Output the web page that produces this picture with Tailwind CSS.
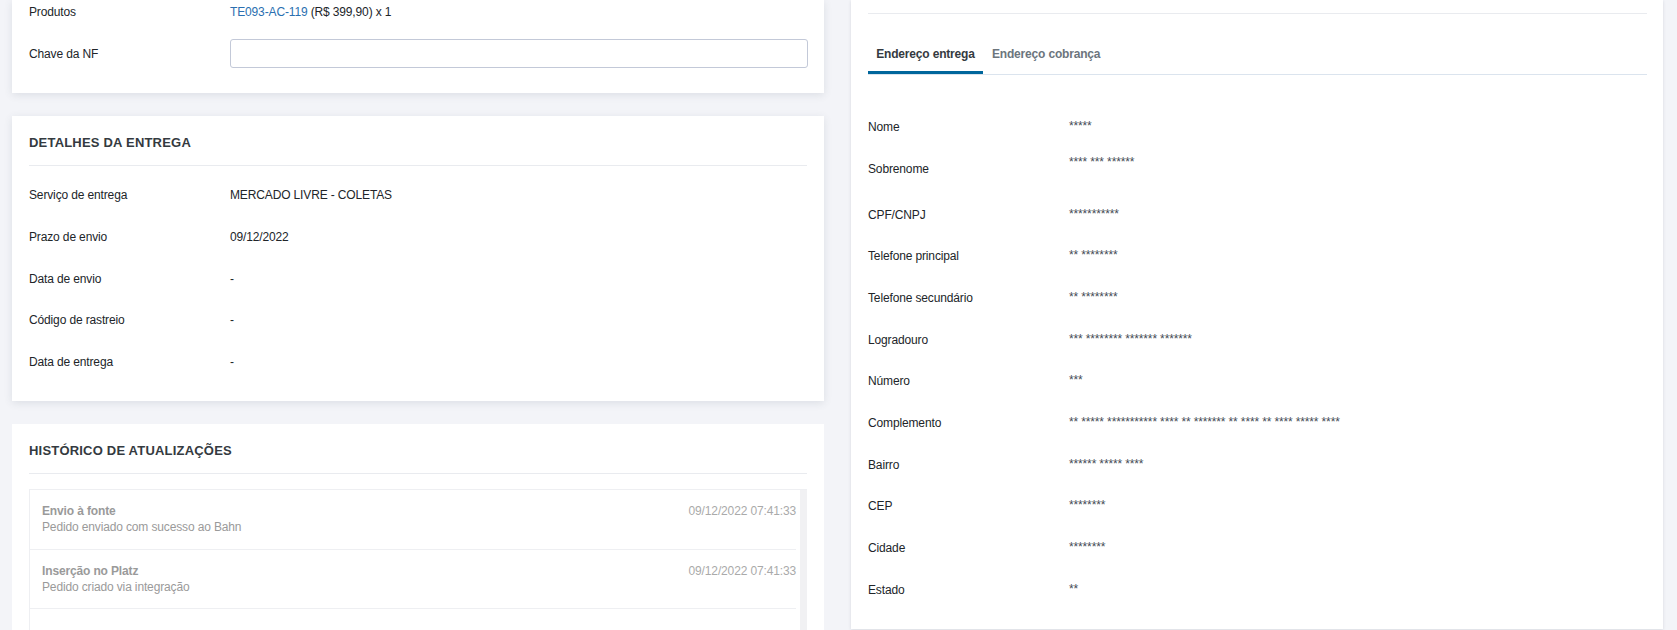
<!DOCTYPE html>
<html lang="pt-BR">
<head>
    <meta charset="UTF-8">
    <script src="https://cdn.jsdelivr.net/npm/@tailwindcss/browser@4"></script>
    <title>Pedido</title>
</head>
<body class="h-[630px] overflow-hidden bg-[#f3f4f8] font-['Liberation_Sans',sans-serif] text-xs tracking-[-0.14px] text-[#212529]">
    <div class="flex h-[630px] items-start gap-[27px] overflow-hidden pl-3">
        <!-- coluna esquerda -->
        <div class="w-[812px] shrink-0">
            <div class="h-[93px] bg-white shadow-[0_2px_8px_rgba(60,70,90,0.12)] pl-[17px] pr-4">
                <div class="flex h-[24px] items-center">
                    <span class="w-[201px]">Produtos</span>
                    <span><a href="#" class="text-[#2a6fb0]">TE093-AC-119</a> (R$ 399,90) x 1</span>
                </div>
                <div class="mt-[15px] flex h-[29px] items-center">
                    <span class="w-[201px]">Chave da NF</span>
                    <input type="text" class="h-[29px] flex-1 rounded-[3px] border border-[#c3c9d8] bg-white">
                </div>
            </div>

            <div class="mt-[23px] h-[285px] bg-white shadow-[0_2px_8px_rgba(60,70,90,0.12)] px-[17px]">
                <h2 class="flex h-[50px] items-center border-b border-[#e9ebef] pt-[4px] text-[13px] font-bold tracking-[0.2px] text-[#343a40]">DETALHES DA ENTREGA</h2>
                <div class="mt-[8px] flex h-[42px] items-center"><span class="w-[201px]">Serviço de entrega</span><span>MERCADO LIVRE - COLETAS</span></div>
                <div class="flex h-[42px] items-center"><span class="w-[201px]">Prazo de envio</span><span>09/12/2022</span></div>
                <div class="flex h-[41px] items-center"><span class="w-[201px]">Data de envio</span><span>-</span></div>
                <div class="flex h-[42px] items-center"><span class="w-[201px]">Código de rastreio</span><span>-</span></div>
                <div class="flex h-[42px] items-center"><span class="w-[201px]">Data de entrega</span><span>-</span></div>
            </div>

            <div class="mt-[23px] h-[206px] bg-white px-[17px]">
                <h2 class="flex h-[50px] items-center border-b border-[#e9ebef] pt-[5px] text-[13px] font-bold tracking-[0.2px] text-[#343a40]">HISTÓRICO DE ATUALIZAÇÕES</h2>
                <div class="mt-[15px] flex h-[141px] border-t border-l border-[#eeeff2]">
                    <div class="flex-1 text-[#9a9a9a]">
                        <div class="h-[60px] border-b border-[#eeeff2] pl-3 pt-[13px]">
                            <div class="flex justify-between leading-4"><span class="font-bold">Envio à fonte</span><span class="text-[#aaaaaa]">09/12/2022 07:41:33</span></div>
                            <div class="leading-4">Pedido enviado com sucesso ao Bahn</div>
                        </div>
                        <div class="h-[59px] border-b border-[#eeeff2] pl-3 pt-[13px]">
                            <div class="flex justify-between leading-4"><span class="font-bold">Inserção no Platz</span><span class="text-[#aaaaaa]">09/12/2022 07:41:33</span></div>
                            <div class="leading-4">Pedido criado via integração</div>
                        </div>
                    </div>
                    <div class="ml-1 w-[7px] bg-[#f1f1f3]"></div>
                </div>
            </div>
        </div>

        <!-- coluna direita -->
        <div class="h-[629px] w-[812px] shrink-0 bg-white pl-[17px] pr-4 shadow-[0_1px_3px_rgba(60,70,90,0.15)]">
            <div class="h-[14px] border-b border-[#e9ebef]"></div>
            <div class="flex h-[61px] items-end border-b border-[#dbe4ee] font-bold tracking-[-0.18px]">
                <a href="#" class="flex h-[40px] w-[115px] items-center justify-center border-b-[3px] border-[#00669c] pt-[2px] text-[#343a40]">Endereço entrega</a>
                <a href="#" class="flex h-[40px] items-center pb-[3px] pl-[9px] pt-[2px] text-[#6c757d]">Endereço cobrança</a>
            </div>
            <div class="pt-[31px]">
                <div class="flex h-[42px] items-center"><span class="w-[201px]">Nome</span><span class="-translate-y-[1px] text-[#444b55]">*****</span></div>
                <div class="flex h-[46px] items-start"><span class="mt-[13px] w-[201px]">Sobrenome</span><span class="mt-[6px] text-[#444b55]">**** *** ******</span></div>
                <div class="flex h-[41px] items-center"><span class="w-[201px]">CPF/CNPJ</span><span class="-translate-y-[1px] text-[#444b55]">***********</span></div>
                <div class="flex h-[42px] items-center"><span class="w-[201px]">Telefone principal</span><span class="-translate-y-[1px] text-[#444b55]">** ********</span></div>
                <div class="flex h-[42px] items-center"><span class="w-[201px]">Telefone secundário</span><span class="-translate-y-[1px] text-[#444b55]">** ********</span></div>
                <div class="flex h-[41px] items-center"><span class="w-[201px]">Logradouro</span><span class="-translate-y-[1px] text-[#444b55]">*** ******** ******* *******</span></div>
                <div class="flex h-[42px] items-center"><span class="w-[201px]">Número</span><span class="-translate-y-[1px] text-[#444b55]">***</span></div>
                <div class="flex h-[42px] items-center"><span class="w-[201px]">Complemento</span><span class="-translate-y-[1px] text-[#444b55]">** ***** *********** **** ** ******* ** **** ** **** ***** ****</span></div>
                <div class="flex h-[41px] items-center"><span class="w-[201px]">Bairro</span><span class="-translate-y-[1px] text-[#444b55]">****** ***** ****</span></div>
                <div class="flex h-[42px] items-center"><span class="w-[201px]">CEP</span><span class="-translate-y-[1px] text-[#444b55]">********</span></div>
                <div class="flex h-[42px] items-center"><span class="w-[201px]">Cidade</span><span class="-translate-y-[1px] text-[#444b55]">********</span></div>
                <div class="flex h-[41px] items-center"><span class="w-[201px]">Estado</span><span class="-translate-y-[1px] text-[#444b55]">**</span></div>
            </div>
        </div>
    </div>
</body>
</html>
